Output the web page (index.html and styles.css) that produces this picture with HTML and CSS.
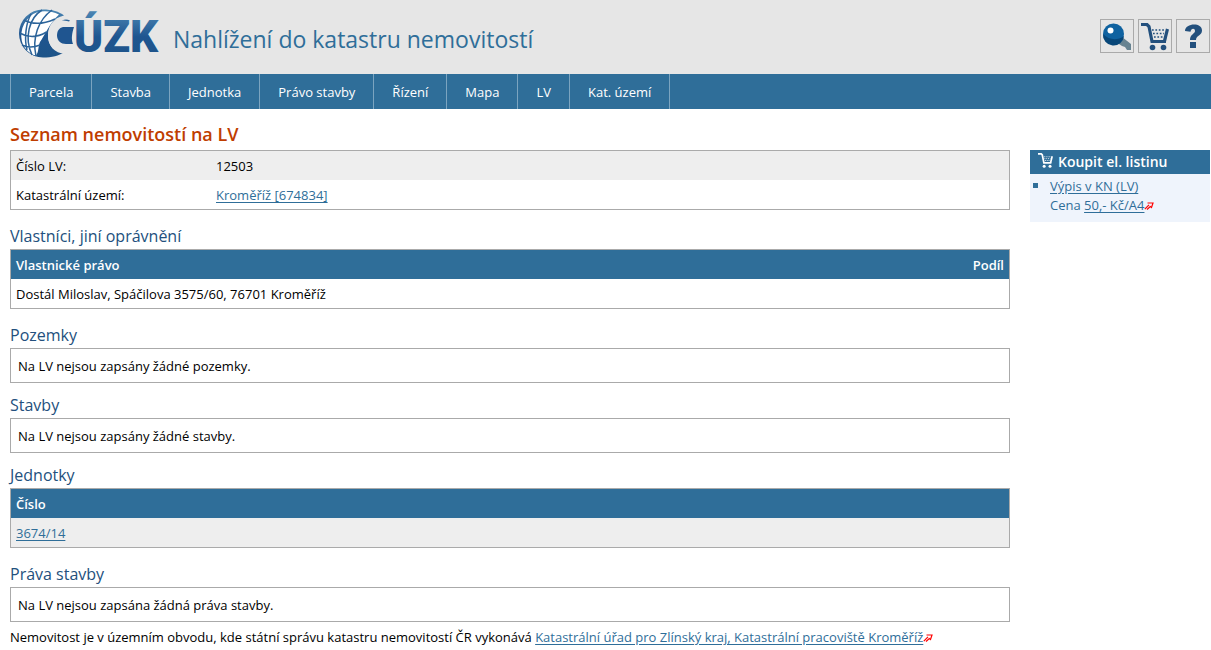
FILE: index.html
```html
<!DOCTYPE html>
<html lang="cs">
<head>
<meta charset="utf-8">
<title>Nahlížení do katastru nemovitostí</title>
<link rel="stylesheet" href="styles.css">
</head>
<body>
<svg class="sprite" aria-hidden="true">
  <symbol id="cart" viewBox="0 0 28 28">
    <path d="M0 1.500h6l2 2 3 15h14" fill="none" stroke="currentColor" stroke-width="3.200"/>
    <path d="M26.500 6l-3 12" fill="none" stroke="currentColor" stroke-width="3.200"/>
    <path d="M11 7h13M12 10.500h11M13 14h9" fill="none" stroke="currentColor" stroke-width="1.500" stroke-dasharray="1.700 1.700"/>
    <circle cx="11.500" cy="24.500" r="2.800" fill="currentColor"/>
    <circle cx="22.500" cy="24.500" r="2.800" fill="currentColor"/>
  </symbol>
  <symbol id="external" viewBox="0 0 10 8">
    <path d="M3.500 1h5.500l-1.500 4.500-1.200-1L3 7.500M.8 7.200L5 2.800" fill="none" stroke="#f00" stroke-width="1.200"/>
  </symbol>
</svg>

<header class="header">
  <a class="brand" href="#" aria-label="ČÚZK">
    <svg class="logo" viewBox="0 0 144 52" aria-hidden="true">
      <defs>
        <linearGradient id="blue" x1="0" y1="0" x2="0" y2="1">
          <stop offset="0" stop-color="#4b86b3"/>
          <stop offset=".5" stop-color="#1f5590"/>
          <stop offset="1" stop-color="#1d5488"/>
        </linearGradient>
      </defs>
      <path d="M46 7.500C41 3.500 34 1.500 25 1.500a24 24 0 0 0 0 48c9 0 16-1.500 21-5.500C36 44 30 37 30 28c0-10 5-18 16-20.500z" fill="url(#blue)"/>
      <path d="M41 6.500C31 2 19 2 12 8.500C2 17 1 32 7 40c3 4 7 7 11 7.500C21 44 20 38 22 34C27 27 31 16 41 6.500z" fill="#fff"/>
      <path d="M6 12c9 5 20 4 31-1M1.500 25c9 5 18 4.500 27-1M4 37c6 3 11 3 18 0M24 2C11 10 6 30 14 47M34 2C20 12 14 30 18 48M13 6C8 15 6 30 9 42" fill="none" stroke="#2c649a" stroke-width="1.500"/>
      <path d="M52 11.500C37 9 30 17 30 28c0 10 7 18 18 17.500l8-3.500c-7 0-15-1-17-8V22c1-6 6-9 13-10.500z" fill="#e6e6e6"/>
      <path d="M44 12.500c3-1.500 5-1.500 8 0l-1 1c-3-.8-5-.8-7-1z" fill="#2c649a"/>
      <path d="M56 19H45c-4 1-6 4-6 8.500c0 5 4 8.500 9 8.500h7c-2-5-1-11 1-17z" fill="#1f5590"/>
      <text class="logo-text" x="56" y="44" fill="url(#blue)">ÚZK</text>
    </svg>
    <span class="site-title">Nahlížení do katastru nemovitostí</span>
  </a>
  <div class="tools">
    <button class="tool" type="button" aria-label="Přihlášení">
      <svg viewBox="0 0 32 32" aria-hidden="true">
        <path d="M15 22l6-5 9 7v6h-4l-2-3-3-1z" fill="#678391"/>
        <circle cx="12.500" cy="14" r="10.500" fill="#0f62a0"/>
        <path d="M2 14a10.500 10.500 0 0 0 21 2c-7 5-15 4-21-2z" fill="#084779"/>
        <circle cx="9.500" cy="10.500" r="3" fill="#fff"/>
      </svg>
    </button>
    <button class="tool" type="button" aria-label="Košík">
      <svg viewBox="0 0 32 32" aria-hidden="true"><use href="#cart" x="2" y="3" width="28" height="28"/></svg>
    </button>
    <button class="tool" type="button" aria-label="Nápověda">
      <svg viewBox="0 0 32 32" aria-hidden="true">
        <path d="M8 11C8 3 25 2 25 10.500c0 5-6 5-6 9.500h-6c0-6 5-6 5-9c0-3-4-3-4.500.800z" fill="currentColor"/>
        <path d="M13 22h6v6h-6z" fill="currentColor"/>
      </svg>
    </button>
  </div>
</header>

<nav class="nav">
  <a href="#">Parcela</a><a href="#">Stavba</a><a href="#">Jednotka</a><a href="#">Právo stavby</a><a href="#">Řízení</a><a href="#">Mapa</a><a href="#">LV</a><a href="#">Kat. území</a>
</nav>

<div class="page">
  <main class="main">
    <h1>Seznam nemovitostí na LV</h1>
    <table class="grid">
      <tr class="shaded"><th class="label" scope="row">Číslo LV:</th><td>12503</td></tr>
      <tr><th class="label" scope="row">Katastrální území:</th><td><a href="#">Kroměříž [674834]</a></td></tr>
    </table>

    <h2>Vlastníci, jiní oprávnění</h2>
    <table class="grid">
      <thead><tr><th>Vlastnické právo</th><th class="right">Podíl</th></tr></thead>
      <tbody><tr><td>Dostál Miloslav, Spáčilova 3575/60, 76701 Kroměříž</td><td></td></tr></tbody>
    </table>

    <h2>Pozemky</h2>
    <p class="box">Na LV nejsou zapsány žádné pozemky.</p>

    <h2>Stavby</h2>
    <p class="box">Na LV nejsou zapsány žádné stavby.</p>

    <h2>Jednotky</h2>
    <table class="grid">
      <thead><tr><th>Číslo</th></tr></thead>
      <tbody><tr class="shaded"><td><a href="#">3674/14</a></td></tr></tbody>
    </table>

    <h2>Práva stavby</h2>
    <p class="box last">Na LV nejsou zapsána žádná práva stavby.</p>

    <p class="note">Nemovitost je v územním obvodu, kde státní správu katastru nemovitostí ČR vykonává <a href="#">Katastrální úřad pro Zlínský kraj, Katastrální pracoviště Kroměříž<svg class="ext" aria-hidden="true"><use href="#external"/></svg></a></p>
  </main>

  <aside class="side">
    <h3><svg class="mini-cart" aria-hidden="true"><use href="#cart"/></svg>Koupit el. listinu</h3>
    <ul>
      <li><a href="#">Výpis v KN (LV)</a><br>Cena <a href="#">50,- Kč/A4<svg class="ext" aria-hidden="true"><use href="#external"/></svg></a></li>
    </ul>
  </aside>
</div>
</body>
</html>
```
FILE: styles.css
```css
* { box-sizing: border-box; }

body {
  margin: 0;
  background: #fff;
  color: #000;
  font: 13px/19px "Open Sans", "Noto Sans", sans-serif;
}

a { color: #2f6e99; text-underline-offset: 2px; }

.sprite { display: none; }

.header {
  display: flex;
  align-items: center;
  justify-content: space-between;
  height: 74px;
  padding: 0 1px 0 18px;
  background: #e6e6e6;
}

.brand {
  display: flex;
  align-items: center;
  gap: 11px;
  color: #2f6e99;
  text-decoration: none;
}

.logo { width: 144px; height: 52px; margin-bottom: 6px; overflow: visible; }
.logo-text { font: 900 44px Roboto, sans-serif; }
.site-title { font-size: 23px; line-height: 32px; padding-top: 4px; }

.tools { display: flex; gap: 4px; margin-bottom: 2px; }

.tool {
  width: 34px;
  height: 34px;
  padding: 0;
  border: 1px solid #aaa;
  background: none;
  color: #23507d;
}

.tool svg { display: block; width: 32px; height: 32px; }

.nav { display: flex; padding-left: 10px; background: #2f6e99; }

.nav a {
  padding: 9px 18px 7px;
  border-right: 1px solid #7ba4c0;
  color: #fff;
  text-decoration: none;
}

.nav a:first-child { border-left: 1px solid #7ba4c0; }

.page {
  display: flex;
  align-items: flex-start;
  gap: 20px;
  padding: 13px 1px 0 10px;
}

.main { flex: 1; min-width: 0; }

h1 {
  margin: 0 0 4px;
  color: #bf3d00;
  font-size: 18px;
  font-weight: 600;
  line-height: 24px;
}

h2 {
  margin: 0 0 3px;
  color: #23507d;
  font-size: 16px;
  font-weight: 400;
  line-height: 20px;
}

.grid {
  width: 100%;
  margin-bottom: 16px;
  border: 1px solid #aaa;
  border-spacing: 0;
}

.grid td, .grid th { padding: 6px 5px 4px; text-align: left; font-weight: 400; }
.grid thead th { background: #2f6e99; color: #fff; font-weight: 600; }
.grid .right { text-align: right; }
.grid .label { width: 200px; }
.shaded { background: #eee; }

.box {
  margin: 0 0 12px;
  padding: 8px 7px 6px;
  border: 1px solid #aaa;
}

.box.last { margin-bottom: 6px; }
.note { margin: 0; }
.ext { width: 10px; height: 8px; }

.side { width: 180px; margin-top: 28px; background: #eff4fc; }

.side h3 {
  display: flex;
  align-items: center;
  gap: 5px;
  margin: 0;
  padding: 0 8px;
  background: #2f6e99;
  color: #fff;
  font-size: 14px;
  font-weight: 600;
  line-height: 24px;
}

.mini-cart { width: 15px; height: 15px; margin-bottom: 4px; }

.side ul {
  margin: 0;
  padding: 3px 0 7px 20px;
  color: #2f6e99;
  list-style: none;
}

.side li { position: relative; }

.side li::before {
  content: "";
  position: absolute;
  top: 6px;
  left: -17px;
  width: 5px;
  height: 5px;
  background: #2f6e99;
}
```
